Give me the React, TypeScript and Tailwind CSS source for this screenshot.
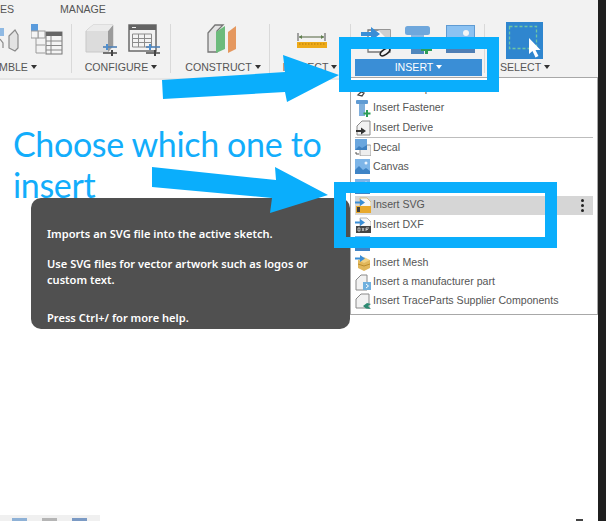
const sans = "font-['Liberation_Sans',Arial,sans-serif]";

function Caret({ light = false }: { light?: boolean }) {
  return (
    <span
      className={`ml-[3px] inline-block border-x-[3px] border-t-[4px] border-x-transparent align-[2px] ${
        light ? 'border-t-white' : 'border-t-[#333]'
      }`}
    />
  );
}

function Group({
  width,
  label,
  children,
  noBorder,
}: {
  width: string;
  label: React.ReactNode;
  children: React.ReactNode;
  noBorder?: boolean;
}) {
  return (
    <div className={`flex h-[49px] shrink-0 flex-col ${width} ${noBorder ? '' : 'border-r border-[#d9d9d9]'}`}>
      <div className="flex h-[36px] items-start">{children}</div>
      <div className="h-[13px] text-center text-[10.6px] leading-[14px] text-[#555]">{label}</div>
    </div>
  );
}

function AssemblePart() {
  return (
    <svg width="20" height="30" viewBox="0 0 20 30" className="shrink-0">
      <path d="M0 4h4v8H0z" fill="#8fb9e3" />
      <path d="M9 12l6-6 3 5v13l-3 3-6-3z" fill="#e3e3e3" stroke="#8a8a8a" strokeWidth="1.2" />
      <path d="M0 15l3 4v5" fill="none" stroke="#8a8a8a" strokeWidth="1.2" />
    </svg>
  );
}

function TableTree() {
  return (
    <svg width="32" height="32" viewBox="0 0 32 32" className="ml-[11px] shrink-0">
      <rect x="0" y="0" width="7" height="7" fill="#5a9bdc" />
      <rect x="7" y="7" width="7" height="7" fill="#f4f4f4" stroke="#9a9a9a" />
      <rect x="0" y="7" width="7" height="7" fill="#f4f4f4" stroke="#9a9a9a" />
      <path d="M5 14v15h9M5 21h9" fill="none" stroke="#9a9a9a" />
      <rect x="15" y="8" width="16" height="22" fill="#f4f4f4" stroke="#777" />
      <rect x="15" y="8" width="16" height="4" fill="#666" />
      <path d="M15 17h16M15 21.500h16M15 26h16M20 12v18" stroke="#888" />
    </svg>
  );
}

function Sliders({ x, y }: { x: number; y: number }) {
  return (
    <g transform={`translate(${x} ${y})`}>
      <path d="M0 3h14" stroke="#4d7fb5" strokeWidth="1.6" />
      <path d="M4 0v6" stroke="#4d8fd0" strokeWidth="2" />
      <path d="M0 9h14" stroke="#555" strokeWidth="1.6" />
      <path d="M9 6v6" stroke="#444" strokeWidth="2" />
    </g>
  );
}

function Cube() {
  return (
    <svg width="32" height="32" viewBox="0 0 32 32" className="ml-[13px] shrink-0">
      <path d="M1 7l7-6h20v21l-5 6H1z" fill="#dcdcdc" stroke="#c8c8c8" />
      <path d="M23 7l5-6v21l-5 6z" fill="#9b9b9b" />
      <path d="M1 7h22l5-6H8z" fill="#ebebeb" />
      <Sliders x={18} y={20} />
    </svg>
  );
}

function TableSliders() {
  return (
    <svg width="32" height="32" viewBox="0 0 32 32" className="ml-[11px] shrink-0">
      <rect x="1" y="1" width="27" height="26" fill="#f3f3f3" stroke="#6a6a6a" strokeWidth="1.5" />
      <rect x="1" y="1" width="27" height="5" fill="#636363" />
      <rect x="4" y="3" width="4" height="1" fill="#eee" />
      <path d="M4.500 10h19v13h-19zM4.500 14.500h19M4.500 18.500h19M10.500 10v13M16.500 10v13" fill="none" stroke="#8b8b8b" />
      <Sliders x={18} y={20} />
    </svg>
  );
}

function Planes() {
  return (
    <svg width="32" height="32" viewBox="0 0 32 32" className="ml-[36px] shrink-0">
      <path d="M1 9l7-8h8l-6 6v21H1z" fill="#e3e3e3" stroke="#777" strokeWidth="1.3" />
      <path d="M9 8l9-6v23l-9 4z" fill="#6cbb7c" />
      <path d="M21 8l8-6v23l-8 4z" fill="#e5985f" />
    </svg>
  );
}

function Measure() {
  return (
    <svg width="30" height="16" viewBox="0 0 30 16" className="ml-[27px] mt-[9px] shrink-0">
      <path d="M1 0v8M28 0v8" stroke="#6b6b6b" strokeWidth="1.2" />
      <path d="M2 4h25" stroke="#6b7a5a" strokeWidth="1.2" />
      <path d="M2 4l3-2v4zM27 4l-3-2v4z" fill="#5f7f4e" />
      <rect x="0" y="9" width="30" height="6" fill="#eeaa18" />
      <path d="M2 11h26" stroke="#b77d06" strokeWidth="1" strokeDasharray="1.500 1.500" />
    </svg>
  );
}

function InsertDerive() {
  return (
    <svg width="32" height="32" viewBox="0 0 32 32" className="ml-[10px] mt-[1px] shrink-0">
      <path d="M7 5h22v22H7z" fill="#f7f7f7" stroke="#777" strokeWidth="1.300" />
      <path d="M29 5v12L17 5z" fill="#cfcfcf" />
      <path d="M0 7h10V2l9 7-9 7v-5H0z" fill="#3a8ed6" />
      <ellipse cx="24" cy="27" rx="5.500" ry="2.500" transform="rotate(-35 24 27)" fill="#f2f2f2" stroke="#222" strokeWidth="1.500" />
    </svg>
  );
}

function Bolt() {
  return (
    <svg width="28" height="31" viewBox="0 0 28 31" className="ml-[12px] shrink-0">
      <rect x="0" y="2" width="25" height="9" rx="2.500" fill="#6fa7dc" />
      <rect x="6" y="11" width="13" height="19" fill="#8ab7e2" />
      <path d="M6 15h13M6 19h13" stroke="#5d93c9" />
      <rect x="6" y="24" width="13" height="6" fill="#4f87bd" />
      <path d="M20 21h3v3h4v3h-4v3h-3v-3h-4v-3h4z" fill="#2e9e57" />
    </svg>
  );
}

function Picture() {
  return (
    <svg width="29" height="29" viewBox="0 0 29 29" className="ml-[13px] mt-[1px] shrink-0">
      <rect x="0.500" y="0.500" width="28" height="27" fill="#8cc2f2" stroke="#5f9bd3" />
      <rect x="0" y="22" width="29" height="6" fill="#4f7fb5" />
      <circle cx="20" cy="8" r="3" fill="#f5f5f5" />
    </svg>
  );
}

function SelectIcon() {
  return (
    <svg width="37" height="37" viewBox="0 0 37 37" className="ml-[21px] mt-[-2px] shrink-0">
      <rect width="37" height="37" fill="#2f86cf" />
      <rect x="3.500" y="4.500" width="27" height="22" fill="none" stroke="#6fc6a4" strokeWidth="1.300" strokeDasharray="3 2" />
      <path d="M23 16v16l3.500-3 3 6.500 3-1.500-3-6h5z" fill="#fff" />
    </svg>
  );
}

function MenuIcon({ name }: { name: string }) {
  const arrow = <path d="M0 4.500h5V2l5 3.500L5 9V6.500H0z" fill="#3a8ed6" />;
  switch (name) {
    case 'component':
      return (
        <svg width="16" height="16" viewBox="0 0 16 16">
          <path d="M3 14l3-3 3 1-2 3z" fill="none" stroke="#444" strokeWidth="1.300" />
          <path d="M2 1h12v10H2z" fill="#ddd" />
        </svg>
      );
    case 'fastener':
      return (
        <svg width="16" height="17" viewBox="0 0 16 17">
          <rect x="1" y="0" width="12" height="4" rx="1" fill="#5f9bd3" />
          <rect x="4" y="4" width="6" height="12" fill="#7fb0dd" />
          <path d="M11 10h2v2.500h2.500v2H13V17h-2v-2.500H8.500v-2H11z" fill="#2e9e57" />
        </svg>
      );
    case 'derive':
      return (
        <svg width="16" height="16" viewBox="0 0 16 16">
          <path d="M2 6l5-5h8v14H2z" fill="#f2f2f2" stroke="#8a8a8a" />
          <path d="M1 10h5V7.500l5 3.500-5 3.500V12H1z" fill="#333" />
        </svg>
      );
    case 'decal':
      return (
        <svg width="16" height="17" viewBox="0 0 16 17">
          <rect x="5" y="6" width="11" height="11" rx="1" fill="#eee" stroke="#9a9a9a" />
          <rect x="0" y="0" width="12" height="11" fill="#6aa6de" />
          <path d="M0 11l4-4 3 2 5-3v5H0z" fill="#3e80c0" />
          <path d="M1 13v2h3" fill="none" stroke="#555" />
        </svg>
      );
    case 'canvas':
    case 'blue':
      return (
        <svg width="15" height="15" viewBox="0 0 15 15">
          <rect width="15" height="15" fill="#7db5e8" />
          <circle cx="11" cy="4" r="1.500" fill="#eaf4ff" />
          <path d="M0 15V11l4-4 4 4 3-2 4 3v3z" fill="#3e84c6" />
        </svg>
      );
    case 'svg':
      return (
        <svg width="16" height="16" viewBox="0 0 16 16">
          <path d="M5 1h7l4 4v5H5z" fill="#f7f7f7" stroke="#c9a444" strokeWidth=".6" />
          {arrow}
          <rect x="1" y="9" width="15" height="7" fill="#e8a92c" />
          <rect x="2" y="10" width="3" height="5" fill="#3f3f3f" />
        </svg>
      );
    case 'dxf':
      return (
        <svg width="16" height="16" viewBox="0 0 16 16">
          <path d="M5 1h7l4 4v5H5z" fill="#f7f7f7" stroke="#888" strokeWidth=".6" />
          {arrow}
          <rect x="1" y="9" width="15" height="7" fill="#444" />
          <path d="M3 11h2v3H3zM7 11l2 3M9 11l-2 3M11 11v3M11 11h3M11 12.500h2" fill="none" stroke="#eee" strokeWidth=".7" />
        </svg>
      );
    case 'mesh':
      return (
        <svg width="16" height="17" viewBox="0 0 16 17">
          <path d="M3 6h12v8l-6 3-6-3z" fill="#e1b75b" />
          <path d="M3 6l6-3 6 3-6 3z" fill="#f0d083" />
          <path d="M3 10l6 2 6-2" fill="none" stroke="#bb8d2d" />
          <path d="M0 3.500h5V1l5 3.500L5 8V5.500H0z" fill="#3a8ed6" />
        </svg>
      );
    case 'part':
      return (
        <svg width="16" height="17" viewBox="0 0 16 17">
          <path d="M1 6l5-5h6v15H1z" fill="#f2f2f2" stroke="#8a8a8a" />
          <rect x="8" y="8" width="8" height="8" fill="#6fb0de" />
          <path d="M11 10l2.500 2-2.500 2" fill="none" stroke="#fff" />
        </svg>
      );
    default:
      return (
        <svg width="16" height="17" viewBox="0 0 16 17">
          <path d="M1 6l5-5h8v14H1z" fill="#f2f2f2" stroke="#8a8a8a" />
          <path d="M8 13l4-3 4 1-3 2 3 3-5-.5z" fill="#2d8a72" />
        </svg>
      );
  }
}

const menuRows = [
  { icon: 'component', text: 'Insert Component' },
  { icon: 'fastener', text: 'Insert Fastener' },
  { icon: 'derive', text: 'Insert Derive', divider: true },
  { icon: 'decal', text: 'Decal' },
  { icon: 'canvas', text: 'Canvas' },
  { icon: 'blue', text: '' },
  { icon: 'svg', text: 'Insert SVG', active: true },
  { icon: 'dxf', text: 'Insert DXF' },
  { icon: 'blue', text: '' },
  { icon: 'mesh', text: 'Insert Mesh' },
  { icon: 'part', text: 'Insert a manufacturer part' },
  { icon: 'trace', text: 'Insert TraceParts Supplier Components' },
];

function InsertMenu() {
  return (
    <div className="absolute left-[350px] top-[77px] w-[248px] border border-[#a8a8a8] bg-white pb-[3px] pl-[4px] pr-[4px] pt-[1.6px]">
      {menuRows.map((row, i) => (
        <div key={i}>
          <div
            className={`flex h-[19.2px] items-center text-[10.6px] text-[#555] ${row.active ? 'bg-[#d6d6d6]' : ''}`}
          >
            <span className="flex w-[18px] shrink-0 items-center">
              <MenuIcon name={row.icon} />
            </span>
            <span>{row.text}</span>
            {row.active && (
              <span className="ml-auto mr-[9px] flex flex-col gap-[2px]">
                <span className="h-[3px] w-[3px] rounded-full bg-[#222]" />
                <span className="h-[3px] w-[3px] rounded-full bg-[#222]" />
                <span className="h-[3px] w-[3px] rounded-full bg-[#222]" />
              </span>
            )}
          </div>
          {row.divider && <div className="h-px bg-[#bdbdbd]" />}
        </div>
      ))}
    </div>
  );
}

export default function App() {
  return (
    <div className={`relative flex h-[521px] w-[606px] overflow-hidden bg-white ${sans}`}>
      <main className="flex min-w-0 flex-1 flex-col">
        <header className="h-[80px] shrink-0 border-b-2 border-[#e6e6e6] bg-[#f2f2f2]">
          <nav className="flex h-[24px] pt-[2px] text-[10.6px] leading-[14px] text-[#555]">
            <span className="w-[60px]">ES</span>
            <span>MANAGE</span>
          </nav>
          <div className="flex">
            <Group width="w-[72px]" label={<span className="-ml-[35px] inline-block">MBLE<Caret /></span>}>
              <AssemblePart />
              <TableTree />
            </Group>
            <Group width="w-[99px]" label={<>CONFIGURE<Caret /></>}>
              <Cube />
              <TableSliders />
            </Group>
            <Group width="w-[99px]" label={<span className="ml-[6px] inline-block">CONSTRUCT<Caret /></span>}>
              <Planes />
            </Group>
            <Group width="w-[81px]" label={<>INSPECT<Caret /></>}>
              <Measure />
            </Group>
            <Group
              width="w-[134px]"
              label={
                <div className="-mt-px ml-[4px] mr-[2px] h-[17px] bg-[#3a8ed6] text-[10.6px] leading-[17px] text-white">
                  INSERT
                  <Caret light />
                </div>
              }
            >
              <InsertDerive />
              <Bolt />
              <Picture />
            </Group>
            <Group width="w-[80px]" noBorder label={<>SELECT<Caret /></>}>
              <SelectIcon />
            </Group>
          </div>
        </header>
        <div className="flex-1" />
        <footer className="flex h-[6px] items-end justify-between">
          <div className="flex h-[6px] w-[100px] items-end gap-[15px] bg-[#f0f0f0] pl-[12px]">
            <span className="h-[3px] w-[15px] bg-[#8eb1d6]" />
            <span className="h-[3px] w-[15px] bg-[#b5b5b5]" />
            <span className="h-[3px] w-[15px] bg-[#7b9ac4]" />
          </div>
          <span className="mr-[15px] h-[2px] w-[7px] bg-[#444]" />
        </footer>
      </main>
      <aside className="w-[8px] shrink-0 bg-[#1f1f1f]" />

      <InsertMenu />

      <h1 className="absolute left-[13px] top-[123px] font-['Lato',sans-serif] text-[34px] font-normal leading-[41px] tracking-[-0.35px] text-[#12adfb]">
        Choose which one to
        <br />
        insert
      </h1>

      <div className="absolute left-[31px] top-[198px] h-[131px] w-[319px] rounded-[10px] bg-[#505050] px-[16px] pt-[28px] font-['Noto_Sans',sans-serif] text-[11.1px] font-semibold leading-[16px] text-white">
        <p>Imports an SVG file into the active sketch.</p>
        <p className="mt-[14px]">Use SVG files for vector artwork such as logos or custom text.</p>
        <p className="mt-[22px]">Press Ctrl+/ for more help.</p>
      </div>

      <div className="absolute left-[339px] top-[37px] h-[55px] w-[160px] border-x-[12px] border-y-[12px] border-[#0aaefc]" />
      <div className="absolute left-[334px] top-[182px] h-[66px] w-[223px] border-x-[12px] border-y-[11px] border-[#0aaefc]" />

      <svg width="606" height="521" viewBox="0 0 606 521" className="pointer-events-none absolute left-0 top-0">
        <path d="M162 80L285 72L283 55L339 75L287 102L285 92L163 99z" fill="#0aaefc" />
        <path d="M152 167L276 180L275 167L328 195L270 213L272 198L152 187z" fill="#0aaefc" />
      </svg>
    </div>
  );
}
